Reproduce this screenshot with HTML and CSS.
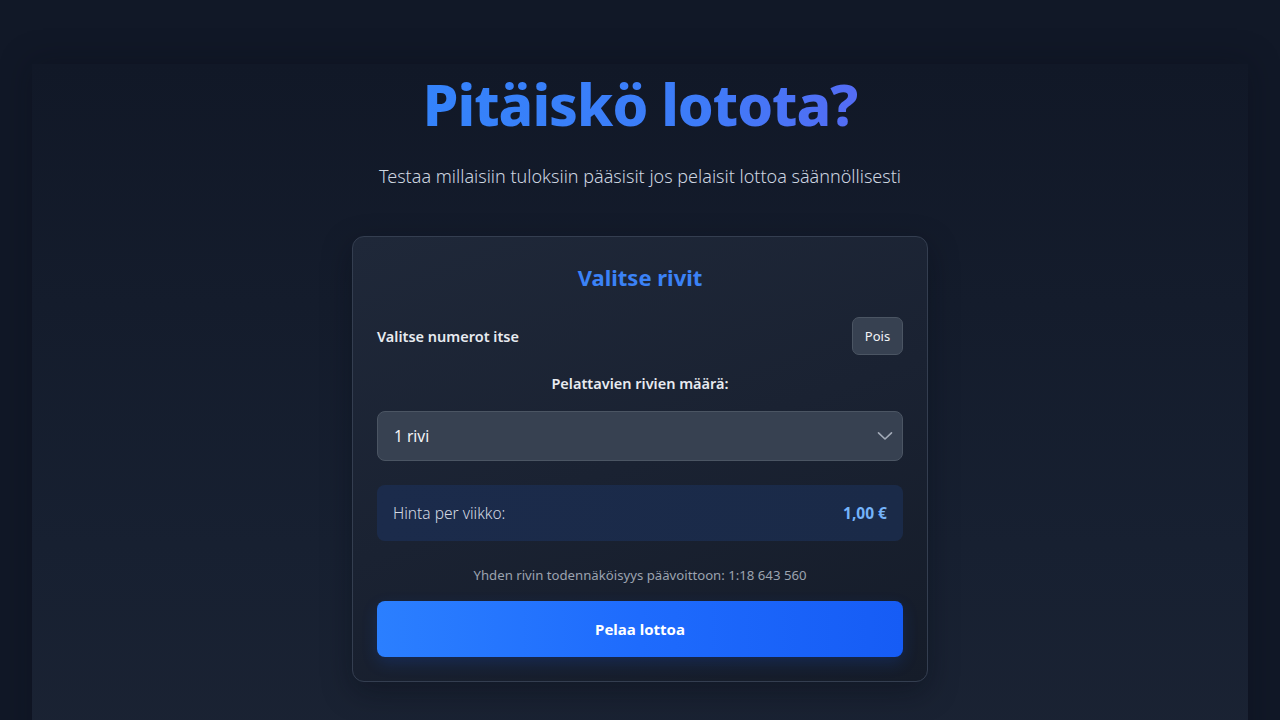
FILE: index.html
```html
<!DOCTYPE html>
<html lang="fi">
<head>
<meta charset="utf-8">
<title>Pitäiskö lotota?</title>
<link rel="stylesheet" href="styles.css">
</head>
<body>
<main class="page">
  <header class="hero">
    <h1 class="hero-title">Pitäiskö lotota?</h1>
    <p class="hero-sub">Testaa millaisiin tuloksiin pääsisit jos pelaisit lottoa säännöllisesti</p>
  </header>
  <section class="card">
    <h2 class="card-title">Valitse rivit</h2>
    <div class="toggle-row">
      <span class="toggle-label">Valitse numerot itse</span>
      <button class="toggle-btn" type="button">Pois</button>
    </div>
    <div class="field-label">Pelattavien rivien määrä:</div>
    <div class="select">
      <span class="select-value">1 rivi</span>
      <svg class="chevron" width="16" height="10" viewBox="0 0 16 10"><path d="M1.5 1.8 L8 8 L14.5 1.8" fill="none" stroke="#a3abb8" stroke-width="1.6" stroke-linecap="round" stroke-linejoin="round"/></svg>
    </div>
    <div class="price">
      <span class="price-label">Hinta per viikko:</span>
      <span class="price-value">1,00 €</span>
    </div>
    <p class="odds">Yhden rivin todennäköisyys päävoittoon: 1:18 643 560</p>
    <button class="play-btn" type="button">Pelaa lottoa</button>
  </section>
</main>
</body>
</html>
```

FILE: styles.css
```css
* { box-sizing: border-box; }
html, body { margin: 0; padding: 0; }
body {
  background: #111827;
  font-family: "Noto Sans", "Open Sans", sans-serif;
  color: #e5e7eb;
  height: 720px;
  overflow: hidden;
}
.page {
  margin: 64px 32px 0;
  min-height: 800px;
  background: linear-gradient(180deg, rgba(17,24,39,0) 0%, #172031 60%, #1c2434 100%);
  box-shadow: 0 0 30px rgba(8,12,22,0.35);
  display: flex;
  flex-direction: column;
  align-items: center;
}
.hero { text-align: center; }
.hero-title {
  margin: 5px 0 0;
  font-size: 57px;
  line-height: 70px;
  font-weight: 800;
  letter-spacing: -1px;
  background: linear-gradient(90deg, #3384fb 0%, #3d7cf8 60%, #5a68f3 100%);
  -webkit-background-clip: text;
  background-clip: text;
  color: transparent;
}
.hero-sub {
  margin: 25px 0 0;
  font-size: 18px;
  line-height: 24px;
  font-weight: 300;
  color: #cdd5e0;
}
.card {
  margin-top: 48px;
  width: 576px;
  border: 1px solid #343e50;
  border-radius: 12px;
  padding: 24px;
  background: linear-gradient(160deg, #1f2839 0%, #1a2232 50%, #151c29 100%);
  box-shadow: 0 10px 30px rgba(5,8,16,0.35);
  display: flex;
  flex-direction: column;
}
.card-title {
  margin: 0;
  text-align: center;
  font-size: 22px;
  line-height: 32px;
  font-weight: 700;
  color: #3b82f6;
}
.toggle-row {
  margin-top: 24px;
  display: flex;
  align-items: center;
  justify-content: space-between;
}
.toggle-label {
  font-size: 14.5px;
  font-weight: 600;
  color: #e8ebf0;
}
.toggle-btn {
  height: 38px;
  width: 51px;
  border: 1px solid #4b5563;
  border-radius: 7px;
  background: #374151;
  color: #f3f4f6;
  font-family: inherit;
  font-size: 13px;
  padding: 0;
}
.field-label {
  margin-top: 16px;
  text-align: center;
  font-size: 14.5px;
  line-height: 24px;
  font-weight: 600;
  color: #e8ebf0;
}
.select {
  margin-top: 16px;
  height: 50px;
  border: 1px solid #4b5563;
  border-radius: 8px;
  background: #374151;
  display: flex;
  align-items: center;
  justify-content: space-between;
  padding: 0 9px 0 16px;
}
.select-value { font-size: 15.5px; color: #f3f4f6; }
.chevron { display: block; }
.price {
  margin-top: 24px;
  height: 56px;
  border-radius: 8px;
  background: linear-gradient(90deg, #1b2b4b 0%, #1a2a48 100%);
  display: flex;
  align-items: center;
  justify-content: space-between;
  padding: 0 16px;
}
.price-label { font-size: 15.5px; font-weight: 300; color: #d3d9e2; }
.price-value { font-size: 15.5px; font-weight: 700; color: #74b3fa; }
.odds {
  margin: 24px 0 0;
  text-align: center;
  font-size: 13.2px;
  line-height: 20px;
  color: #9ca3af;
}
.play-btn {
  margin-top: 16px;
  height: 56px;
  border: 0;
  border-radius: 8px;
  background: linear-gradient(90deg, #2b7fff 0%, #1e6bfd 50%, #165cf5 100%);
  color: #ffffff;
  font-family: inherit;
  font-size: 15px;
  font-weight: 700;
  box-shadow: 0 6px 16px rgba(21,93,252,0.18);
}
```
